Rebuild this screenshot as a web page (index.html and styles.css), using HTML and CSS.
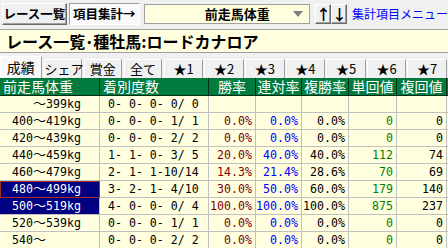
FILE: index.html
```html
<!DOCTYPE html>
<html lang="ja">
<head>
  <meta charset="UTF-8">
  <title>レース一覧</title>
  <link rel="stylesheet" href="styles.css">
</head>
<body>
  <div class="toolbar">
    <button class="btn btn-list">レース一覧</button>
    <button class="btn btn-item">項目集計→</button>
    <div class="combo">
      <span class="combo-text">前走馬体重</span>
      <span class="combo-arrow"></span>
    </div>
    <div class="arrows">
      <button class="btn arrow">↑</button>
      <button class="btn arrow">↓</button>
    </div>
    <a class="menu-link" href="#">集計項目メニュー</a>
  </div>

  <div class="title">レース一覧･種牡馬:ロードカナロア</div>

  <div class="tabs">
    <span class="tab active">成績</span>
    <span class="tab w38">シェア</span>
    <span class="tab">賞金</span>
    <span class="tab w39">全て</span>
    <span class="tab star">★1</span>
    <span class="tab star">★2</span>
    <span class="tab star">★3</span>
    <span class="tab star">★4</span>
    <span class="tab star">★5</span>
    <span class="tab star">★6</span>
    <span class="tab star">★7</span>
  </div>

  <table class="grid">
    <colgroup>
      <col style="width:100px">
      <col style="width:109px">
      <col style="width:47px">
      <col style="width:46px">
      <col style="width:47px">
      <col style="width:48px">
      <col style="width:50px">
      <col style="width:60px">
    </colgroup>
    <thead>
      <tr>
        <th class="left">前走馬体重</th>
        <th class="left">着別度数</th>
        <th>勝率</th>
        <th>連対率</th>
        <th>複勝率</th>
        <th>単回値</th>
        <th>複回値</th>
        <th>単勝</th>
      </tr>
    </thead>
    <tbody>
      <tr>
        <td class="label">   <span class="wave">〜</span>399kg</td>
        <td class="count"> 0- 0- 0- 0/ 0</td>
        <td></td><td></td><td></td><td></td><td></td><td></td>
      </tr>
      <tr>
        <td class="label">400<span class="wave">〜</span>419kg</td>
        <td class="count"> 0- 0- 0- 1/ 1</td>
        <td class="num win">0.0%</td><td class="num place">0.0%</td><td class="num">0.0%</td>
        <td class="num ret">0</td><td class="num">0</td><td></td>
      </tr>
      <tr>
        <td class="label">420<span class="wave">〜</span>439kg</td>
        <td class="count"> 0- 0- 0- 2/ 2</td>
        <td class="num win">0.0%</td><td class="num place">0.0%</td><td class="num">0.0%</td>
        <td class="num ret">0</td><td class="num">0</td><td></td>
      </tr>
      <tr>
        <td class="label">440<span class="wave">〜</span>459kg</td>
        <td class="count"> 1- 1- 0- 3/ 5</td>
        <td class="num win">20.0%</td><td class="num place">40.0%</td><td class="num">40.0%</td>
        <td class="num ret">112</td><td class="num">74</td><td></td>
      </tr>
      <tr>
        <td class="label">460<span class="wave">〜</span>479kg</td>
        <td class="count"> 2- 1- 1-10/14</td>
        <td class="num win">14.3%</td><td class="num place">21.4%</td><td class="num">28.6%</td>
        <td class="num ret">70</td><td class="num">69</td><td></td>
      </tr>
      <tr>
        <td class="label sel focus">480<span class="wave">〜</span>499kg</td>
        <td class="count"> 3- 2- 1- 4/10</td>
        <td class="num win">30.0%</td><td class="num place">50.0%</td><td class="num">60.0%</td>
        <td class="num ret">179</td><td class="num">140</td><td></td>
      </tr>
      <tr>
        <td class="label sel">500<span class="wave">〜</span>519kg</td>
        <td class="count"> 4- 0- 0- 0/ 4</td>
        <td class="num win">100.0%</td><td class="num place">100.0%</td><td class="num">100.0%</td>
        <td class="num ret">875</td><td class="num">237</td><td></td>
      </tr>
      <tr>
        <td class="label">520<span class="wave">〜</span>539kg</td>
        <td class="count"> 0- 0- 0- 1/ 1</td>
        <td class="num win">0.0%</td><td class="num place">0.0%</td><td class="num">0.0%</td>
        <td class="num ret">0</td><td class="num">0</td><td></td>
      </tr>
      <tr>
        <td class="label">540<span class="wave">〜</span></td>
        <td class="count"> 0- 0- 0- 2/ 2</td>
        <td class="num win">0.0%</td><td class="num place">0.0%</td><td class="num">0.0%</td>
        <td class="num ret">0</td><td class="num">0</td><td></td>
      </tr>
    </tbody>
  </table>
</body>
</html>
```

FILE: styles.css
```css
body {
  margin: 0;
  width: 448px;
  height: 248px;
  overflow: hidden;
  background-color: #f0f0f0;
  font-family: "Noto Sans CJK JP", sans-serif;
  font-size: 14px;
  color: #000;
}

/* top toolbar */
.toolbar {
  display: flex;
  align-items: center;
  height: 27px;
  padding-left: 2px;
}

.btn {
  font-family: "Noto Sans CJK JP", sans-serif;
  background-color: #f0f0f0;
  border: 1px solid;
  border-color: #fff #696969 #696969 #fff;
  box-shadow: inset -1px -1px 0 #a0a0a0;
  box-sizing: border-box;
  padding: 0;
  margin: 0;
  color: #000;
  white-space: nowrap;
  line-height: 18px;
}

.btn-list {
  width: 72px;
  height: 22px;
  font-size: 12.5px;
  font-weight: bold;
}

.btn-item {
  width: 79px;
  height: 22px;
  margin-left: 2px;
  font-size: 12.5px;
  font-weight: bold;
  background-color: #fafafa;
  border-color: #a0a0a0 #fff #fff #a0a0a0;
  box-shadow: none;
}

.combo {
  display: flex;
  align-items: center;
  width: 185px;
  height: 20px;
  margin-left: 4px;
  background-color: #ffffe0;
  border: 1px solid #a0a0a0;
  box-sizing: border-box;
}

.combo-text {
  flex: 1;
  padding-left: 60px;
  font-weight: bold;
  font-size: 13px;
  line-height: 18px;
}

.combo-arrow {
  width: 0;
  height: 0;
  margin-right: 6px;
  border-left: 5px solid transparent;
  border-right: 5px solid transparent;
  border-top: 6px solid #808080;
}

.arrows {
  display: flex;
  margin-left: 5px;
}

.arrow {
  width: 16px;
  height: 20px;
  font-size: 15px;
  font-weight: bold;
}

.menu-link {
  margin-left: 5px;
  color: #0000ff;
  text-decoration: none;
  white-space: nowrap;
  font-size: 12px;
}

/* title box */
.title {
  height: 22px;
  margin-top: 2px;
  padding-left: 6px;
  background-color: #ffffe0;
  border-top: 1px solid #a0a0a0;
  border-bottom: 1px solid #a0a0a0;
  font-size: 16px;
  font-weight: bold;
  line-height: 22px;
  white-space: nowrap;
}

/* tabs */
.tabs {
  display: flex;
  align-items: flex-end;
  height: 22px;
  margin-top: 3px;
  white-space: nowrap;
}

.tab {
  width: 40px;
  height: 19px;
  line-height: 18px;
  margin-right: 2px;
  background-color: #f0f0f0;
  border-top: 1px solid #fff;
  border-left: 1px solid #fff;
  border-right: 1px solid #a0a0a0;
  font-size: 13px;
  box-sizing: border-box;
  text-align: center;
}

.tab.w38 {
  width: 38px;
}

.tab.w39 {
  width: 39px;
}

.tab.star {
  width: 41px;
  margin-right: 1px;
}

.tab.active {
  width: 43px;
  height: 22px;
  line-height: 20px;
  background-color: #f8f8f8;
  font-size: 14px;
}

/* data grid */
.grid {
  table-layout: fixed;
  width: 507px;
  border-collapse: separate;
  border-spacing: 0;
  font-family: "DejaVu Sans Mono", "Noto Sans CJK JP", monospace;
  font-size: 11.6px;
}

.grid th {
  height: 18px;
  padding: 0;
  box-sizing: border-box;
  background-color: #007a3d;
  color: #fff;
  font-family: "Noto Sans CJK JP", sans-serif;
  font-size: 14px;
  font-weight: normal;
  line-height: 17px;
  border-right: 1px solid #003018;
  border-bottom: 1px solid #003018;
  white-space: nowrap;
  overflow: hidden;
}

.grid th.left {
  text-align: left;
  padding-left: 3px;
}

.grid td {
  height: 17px;
  padding: 0;
  box-sizing: border-box;
  background-color: #ffffe0;
  border-right: 1px solid #c0c0c0;
  border-bottom: 1px solid #c0c0c0;
  line-height: 16px;
  white-space: pre;
  overflow: hidden;
}

.grid td.label {
  padding-left: 12px;
}

.wave {
  font-family: "Noto Sans CJK JP", sans-serif;
  font-size: 13px;
  line-height: 1;
}

.grid td.count {
  padding-left: 1px;
}

.grid td.num {
  text-align: right;
  padding-right: 3px;
}

.grid td.win {
  color: #800000;
}

.grid td.place {
  color: #0000ff;
}

.grid td.ret {
  color: #008000;
}

.grid td.sel {
  background-color: #000080;
  color: #fff;
}

.grid td.focus {
  outline: 1px solid #a03020;
  outline-offset: -1px;
}
```
